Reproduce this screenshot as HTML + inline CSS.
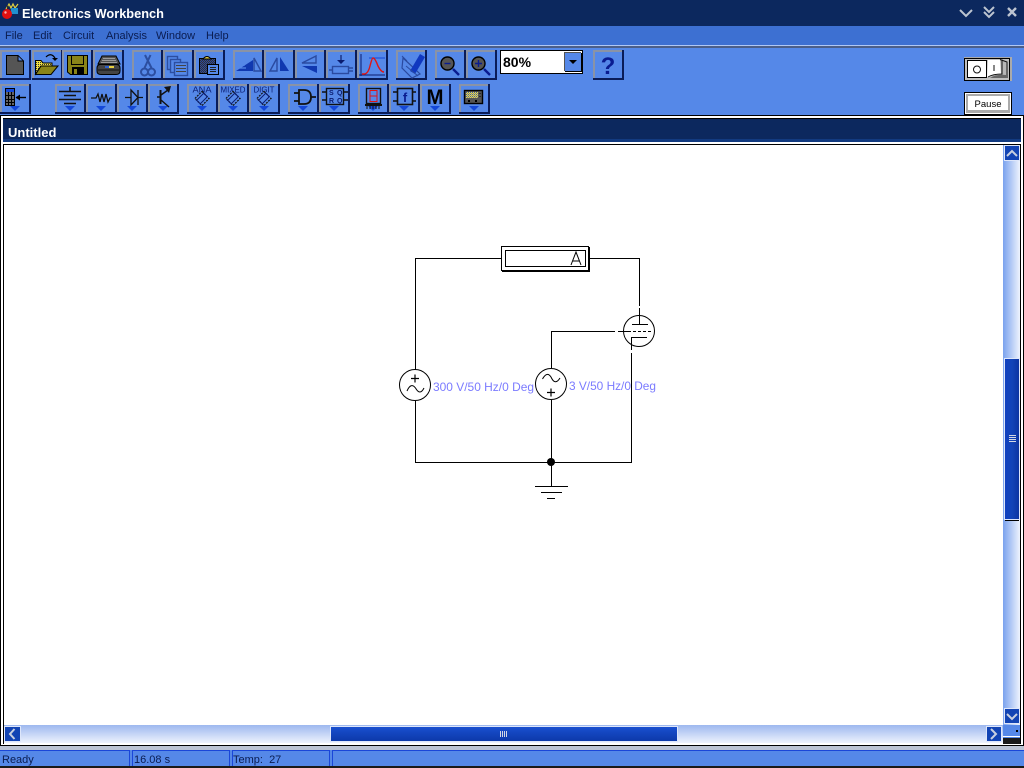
<!DOCTYPE html>
<html><head><meta charset="utf-8"><style>
html,body{margin:0;padding:0;width:1024px;height:768px;overflow:hidden;background:#5588e8}
svg{position:absolute;left:0;top:0}
text{font-family:"Liberation Sans",sans-serif}
</style></head><body>
<svg width="1024" height="768" viewBox="0 0 1024 768" xmlns="http://www.w3.org/2000/svg">
<defs>
<pattern id="dy" width="2" height="2" patternUnits="userSpaceOnUse"><rect width="2" height="2" fill="#f0e040"/><rect width="1" height="1" fill="#333"/></pattern>
<pattern id="ds" width="2" height="2" patternUnits="userSpaceOnUse"><rect width="2" height="2" fill="#f0e040"/><rect width="1" height="1" fill="#3a5ab0"/><rect x="1" y="1" width="1" height="1" fill="#888"/></pattern>
<pattern id="dg" width="2" height="2" patternUnits="userSpaceOnUse"><rect width="2" height="2" fill="#2a48a0"/><rect width="1" height="1" fill="#333"/><rect x="1" y="1" width="1" height="1" fill="#333"/></pattern>
<linearGradient id="vt" x1="0" x2="1" y1="0" y2="0"><stop offset="0" stop-color="#7aa2ee"/><stop offset="1" stop-color="#eef3fd"/></linearGradient>
<linearGradient id="ht" x1="0" x2="0" y1="0" y2="1"><stop offset="0" stop-color="#9db8ef"/><stop offset="1" stop-color="#eef3fd"/></linearGradient>
<linearGradient id="vth" x1="0" x2="1" y1="0" y2="0"><stop offset="0" stop-color="#0f3fc0"/><stop offset=".5" stop-color="#1244b8"/><stop offset="1" stop-color="#0c34a0"/></linearGradient>
<linearGradient id="hth" x1="0" x2="0" y1="0" y2="1"><stop offset="0" stop-color="#1a50d0"/><stop offset="1" stop-color="#0c38a8"/></linearGradient>
<g id="b"><rect width="31" height="30" fill="#0a1c58"/><path d="M0 0H29V2H2V28H0Z" fill="#8a93a6"/><rect x="2" y="2" width="27" height="26" fill="#5588e8"/></g>
<g id="a"><use href="#b"/><path d="M10 22H20L15 27Z" fill="#1448d8"/></g>
<g id="chip"><g transform="rotate(45 15 16.500)"><rect x="10" y="11.500" width="10" height="10" fill="#5588e8" stroke="#111" stroke-width="1.200" stroke-dasharray="2 1"/><rect x="12.500" y="11.500" width="5" height="10" fill="none" stroke="#0a1c70" stroke-width="1"/></g></g>
</defs>

<!-- Title bar -->
<rect width="1024" height="26" fill="#0c285e"/>
<rect y="26" width="1024" height="19" fill="#3d70d2"/>
<rect y="45" width="1024" height="1" fill="#b0c8f6"/>
<rect y="46" width="1024" height="2" fill="#4c5f88"/>
<rect y="48" width="1024" height="68" fill="#5588e8"/>

<!-- app icon -->
<path d="M6 9L9 4L11 8L13 4L15 8L18 4" fill="none" stroke="#e0d040" stroke-width="1.200"/>
<rect x="11" y="8" width="7" height="6" fill="#2090d0"/>
<circle cx="7" cy="14" r="5" fill="#e01010"/><circle cx="5.500" cy="12.500" r="1.200" fill="#ffb0b0"/>
<path d="M8 9L7 5" stroke="#222" stroke-width="1"/>
<text x="22" y="18" fill="#fff" font-size="13" font-weight="bold" textLength="142" lengthAdjust="spacingAndGlyphs">Electronics Workbench</text>

<!-- window controls -->
<path d="M960 10L966 16L972 10" fill="none" stroke="#bcc4d0" stroke-width="2"/>
<path d="M984 7L989 12L994 7M984 12L989 17L994 12" fill="none" stroke="#bcc4d0" stroke-width="2"/>
<path d="M1008 8L1016 16M1016 8L1008 16" fill="none" stroke="#bcc4d0" stroke-width="2.400"/>

<!-- menu -->
<g fill="#0a1c50" font-size="11">
<text x="5" y="39">File</text><text x="33" y="39">Edit</text><text x="63" y="39">Circuit</text><text x="106" y="39">Analysis</text><text x="156" y="39">Window</text><text x="206" y="39">Help</text>
</g>

<!-- Toolbar row 1 -->
<use href="#b" x="0" y="50"/><use href="#b" x="32" y="50"/><use href="#b" x="62" y="50"/><use href="#b" x="93" y="50"/>
<use href="#b" x="132" y="50"/><use href="#b" x="163" y="50"/><use href="#b" x="194" y="50"/>
<use href="#b" x="233" y="50"/><use href="#b" x="264" y="50"/><use href="#b" x="295" y="50"/><use href="#b" x="326" y="50"/><use href="#b" x="357" y="50"/>
<use href="#b" x="396" y="50"/><use href="#b" x="435" y="50"/><use href="#b" x="466" y="50"/><use href="#b" x="593" y="50"/>

<!-- new -->
<path d="M6.500 55.500H18L23.500 61V74.500H6.500Z" fill="#555" stroke="#000"/><path d="M18 56V61H23" fill="#5588e8" stroke="#000"/>
<!-- open -->
<path d="M35.500 74V60.500H41L43 63H52V66H41L35.500 74Z" fill="url(#dy)" stroke="#000"/>
<path d="M35.500 74.500L41 66H58L51 74.500Z" fill="#8a8418" stroke="#000"/>
<path d="M46 57Q51 52 55 58" fill="none" stroke="#000" stroke-width="1.200"/><path d="M52 58H58L55 61Z" fill="#000"/>
<!-- save -->
<path d="M67.500 55.500H87.500V74.500H70.500L67.500 72Z" fill="#8a8418" stroke="#000"/>
<rect x="71.500" y="55.500" width="12" height="9" fill="#8a8418" stroke="#000"/><rect x="72" y="67" width="12" height="8" fill="#000"/><rect x="74" y="69" width="3" height="5" fill="#8a8418"/>
<!-- print -->
<path d="M102 56H116L120 64H98Z" fill="#555" stroke="#000"/><path d="M103 58.500H115M102 60.500H116M101 62.500H117" stroke="#999"/>
<path d="M100 64.500H117Q120 65 120 68V71Q120 74.500 116 74.500H101Q97 74.500 97 71V68Q97 65 100 64.500Z" fill="#444" stroke="#000"/><rect x="109" y="66" width="5" height="2" fill="#e8d040"/><rect x="105" y="66" width="4" height="2" fill="#2a60d0"/><path d="M98 70H119" stroke="#111"/>

<!-- cut -->
<g fill="none" stroke="#2c4ea0" stroke-width="2"><path d="M145 55L151.500 68M150.500 55L144.500 68"/><circle cx="144.500" cy="72" r="3.500"/><circle cx="151.500" cy="72" r="3.500"/></g>
<!-- copy -->
<g stroke="#2c4ea0" stroke-width="1.400"><rect x="167.500" y="56.500" width="10" height="13" fill="#5588e8"/><rect x="170.500" y="59.500" width="10" height="13" fill="#5588e8"/><rect x="174.500" y="62.500" width="13" height="13" fill="#5588e8"/></g><path d="M176 65.500H186M176 68.500H186M176 71.500H186" stroke="#444"/>
<!-- paste -->
<rect x="199.500" y="58.500" width="16" height="15" fill="url(#dg)" stroke="#000"/><path d="M203 59Q207 54 211 59Z" fill="#e8d040" stroke="#000"/>
<rect x="207.500" y="64.500" width="11" height="10" fill="#5588e8" stroke="#000"/><path d="M210 67.500H216M210 69.500H216M210 71.500H216" stroke="#222"/>

<!-- flip set -->
<path d="M236 71L253 60V71Z" fill="#1038b0"/><path d="M242 63Q240 60 245 60M241 65H245M239 68H246" fill="none" stroke="#5588e8" stroke-width="1.200"/>
<path d="M254 71L254 58L261 71Z" fill="#5588e8" stroke="#2a4aa0" stroke-width="1.400"/>
<path d="M270 71L277 58V71Z" fill="#5588e8" stroke="#2a4aa0" stroke-width="1.400"/><path d="M280 57V71H289Z" fill="#1038b0"/>
<path d="M302 63L316 56V63Z" fill="#5588e8" stroke="#2a4aa0" stroke-width="1.400"/><path d="M302 66H317V73Z" fill="#1038b0"/>
<!-- capacitor-ish -->
<path d="M341 55V61" stroke="#2a4aa0" stroke-width="2"/><path d="M337 60H345L341 64Z" fill="#0a1c70"/>
<rect x="332.500" y="66.500" width="16" height="7" fill="#5588e8" stroke="#2a4aa0" stroke-width="1.400"/><path d="M349 68H353M349 71H353M329 70H332" stroke="#2a4aa0" stroke-width="1.400"/>
<!-- graph -->
<path d="M361 54V76M359 75H385" stroke="#0a1c70" stroke-width="1"/><path d="M369 58H385" stroke="#1448d8"/>
<path d="M362 74H364Q368 74 370 66Q372 58 373 58Q375 58 378 66Q381 72 384 72" fill="none" stroke="#e01414" stroke-width="1.400"/>
<!-- describe -->
<path d="M403 58L416 70L420 74L412 78L402 68Z" fill="none" stroke="#2a4aa0" stroke-width="1.200"/>
<path d="M410 71L420 54L425 57L415 74Z" fill="#1038c0"/><path d="M402 56L407 61" stroke="#2a4aa0"/><path d="M406 66L418 76" stroke="#2a4aa0"/>
<!-- zoom -->
<circle cx="447.500" cy="63.500" r="6.500" fill="#555" stroke="#000" stroke-width="1.400"/><path d="M444.500 63.500H450.500" stroke="#0a1c90" stroke-width="1.400"/><path d="M453 69L459 75" stroke="#0a1c90" stroke-width="2.400"/>
<circle cx="478.500" cy="63.500" r="6.500" fill="#555" stroke="#000" stroke-width="1.400"/><path d="M475 63.500H482M478.500 60V67" stroke="#0a1c90" stroke-width="1.400"/><path d="M484 69L490 75" stroke="#0a1c90" stroke-width="2.400"/>

<!-- combo -->
<rect x="500.500" y="50.500" width="82" height="23" fill="#fff" stroke="#000"/>
<rect x="564" y="53" width="17" height="18" fill="#5588e8"/><path d="M564.500 71V52.500H581" fill="none" stroke="#555"/><path d="M565 71.500H581.500V53" fill="none" stroke="#000"/>
<path d="M569 60H577L573 64Z" fill="#000"/>
<text x="503" y="67" font-size="14" font-weight="bold" fill="#000">80%</text>
<!-- help -->
<text x="608" y="74" font-size="24" font-weight="bold" fill="#0a1c90" text-anchor="middle">?</text>

<!-- Toolbar row 2 -->
<use href="#a" x="0" y="84"/>
<use href="#a" x="55" y="84"/><use href="#a" x="86" y="84"/><use href="#a" x="117" y="84"/><use href="#a" x="148" y="84"/>
<use href="#a" x="187" y="84"/><use href="#a" x="218" y="84"/><use href="#a" x="249" y="84"/>
<use href="#a" x="288" y="84"/><use href="#a" x="319" y="84"/>
<use href="#a" x="358" y="84"/><use href="#a" x="389" y="84"/><use href="#a" x="420" y="84"/><use href="#a" x="459" y="84"/>

<!-- parts bin -->
<rect x="5.500" y="88.500" width="9" height="17" fill="#666" stroke="#000"/><rect x="6" y="89" width="8" height="3" fill="#1448d8"/><path d="M8.500 92V105M11.500 92V105M6 95.500H14M6 99.500H14M6 102.500H14" stroke="#000"/>
<path d="M16 97.500H26" stroke="#000" stroke-width="1.400"/><path d="M20 94.500L15.500 97.500L20 100.500Z" fill="#000"/>
<!-- battery -->
<g stroke="#111"><path d="M70 87V91M59 91.500H81M64 95.500H76M59 99.500H81M64 103.500H76" stroke-width="1.600"/></g>
<!-- resistor -->
<path d="M91 98H96L98 94L100 102L102 94L104 102L106 94L108 102L110 98H112" fill="none" stroke="#111" stroke-width="1.300"/>
<!-- diode -->
<path d="M125 97.500H131M138 97.500H143" stroke="#111" stroke-width="1.300" fill="none"/><path d="M131 90L138 97.500L131 105Z" fill="none" stroke="#111" stroke-width="1.300"/><path d="M138 90V105" stroke="#111" stroke-width="1.300"/>
<!-- transistor -->
<path d="M160.500 90V104" stroke="#111" stroke-width="2"/><path d="M157 97H160M161 95L168 90M161 100L169 107" stroke="#111" stroke-width="1.400" fill="none"/><path d="M164 87L171 86L169 93Z" fill="#111"/>

<!-- ANA MIXED DIGIT -->
<g font-size="8" fill="#0a1c70" text-anchor="middle">
<text x="202" y="92.500" textLength="19" lengthAdjust="spacingAndGlyphs">ANA</text><text x="233" y="92.500" textLength="25" lengthAdjust="spacingAndGlyphs">MIXED</text><text x="264" y="92.500" textLength="21" lengthAdjust="spacingAndGlyphs">DIGIT</text>
</g>
<use href="#chip" x="187" y="82"/><use href="#chip" x="218" y="82"/><use href="#chip" x="249" y="82"/>

<!-- AND gate -->
<path d="M299 90H304Q311 90 311 97Q311 104 304 104H299Z" fill="#5588e8" stroke="#111" stroke-width="1.800"/><path d="M294 93H299M294 101H299M311 97H316" stroke="#111" stroke-width="1.800"/>
<!-- SQ RQ -->
<rect x="326.500" y="88.500" width="17" height="16" fill="#5588e8" stroke="#111" stroke-width="1.400"/><path d="M322 92H326M322 100H326M344 92H348M344 100H348" stroke="#111" stroke-width="1.400"/>
<g font-size="7" fill="#0a1c70" font-weight="bold"><text x="329" y="95">S</text><text x="337" y="95">Q</text><text x="329" y="103">R</text><text x="337" y="103">Q</text></g>
<!-- 7-seg -->
<rect x="366.500" y="88.500" width="14" height="15" fill="#5588e8" stroke="#111" stroke-width="1.400"/><path d="M370 90.500H377V96H370ZM370 96V101.500H377V96" fill="none" stroke="#e01414"/><rect x="365" y="104" width="17" height="2" fill="#111"/><path d="M367 106V109M370 106V109M373 106V109M376 106V109M379 106V109" stroke="#111"/>
<!-- f -->
<rect x="397.500" y="88.500" width="15" height="16" fill="#5588e8" stroke="#111" stroke-width="1.600"/><path d="M393 92H397M393 101H397M413 92H416M413 101H416" stroke="#111" stroke-width="1.400"/>
<text x="405" y="102" font-size="13" font-weight="bold" text-anchor="middle" fill="#0a1c90">f</text>
<!-- M -->
<text x="435" y="104" font-size="21" font-weight="bold" text-anchor="middle" fill="#000" textLength="17" lengthAdjust="spacingAndGlyphs">M</text>
<!-- scope -->
<rect x="464.500" y="90.500" width="18" height="13" fill="#555" stroke="#000" stroke-width="1.400"/><rect x="466" y="92" width="12" height="6" fill="url(#ds)"/><rect x="468" y="100" width="2" height="2" fill="#000"/><rect x="475" y="100" width="2" height="2" fill="#000"/><path d="M480 93V94M480 96V97" stroke="#000"/>

<!-- switch -->
<rect x="964" y="57" width="48" height="24" fill="#aaa"/>
<rect x="964.500" y="58.500" width="45" height="22" fill="#c0c0c0" stroke="#000"/>
<rect x="967.500" y="60.500" width="19" height="17" fill="#fff" stroke="#000"/>
<circle cx="977" cy="69.500" r="3.500" fill="none" stroke="#111"/>
<path d="M988 60H1000L1005 62V77H987Z" fill="#fff"/><path d="M1000 59L1006 62V78H988Q992 75 1001 74Z" fill="#b8b8b8"/><path d="M988 77Q993 74 1002 74V59.500M1000 59.500L1007 62V78" fill="none" stroke="#111"/><path d="M994 65V71" stroke="#111"/><path d="M990 78Q996 74 1006 75V78Z" fill="#666"/>

<!-- pause -->
<rect x="964" y="92" width="48" height="23" fill="#000"/>
<rect x="965" y="93" width="46" height="21" fill="#fff"/>
<rect x="966" y="94" width="44" height="19" fill="#aaa"/>
<rect x="968" y="96" width="40" height="14" fill="#fff"/>
<text x="988" y="107" font-size="9.500" text-anchor="middle" fill="#000" textLength="27" lengthAdjust="spacing">Pause</text>

<!-- doc window -->
<rect y="115" width="1024" height="1" fill="#000"/>
<rect y="116" width="1024" height="630" fill="#fff"/>
<rect x="0" y="115" width="1" height="631" fill="#000"/>
<rect x="1023" y="115" width="1" height="631" fill="#000"/>
<rect x="3" y="118" width="1018" height="1" fill="#000"/>
<rect x="3" y="119" width="1018" height="23" fill="#0c285e"/>
<rect x="3" y="139" width="1018" height="3" fill="#123a80"/>
<rect x="3" y="144" width="1018" height="1" fill="#000"/>
<rect x="3" y="144" width="1" height="600" fill="#000"/>
<rect x="1020" y="144" width="1" height="600" fill="#000"/>
<rect x="0" y="745" width="1024" height="1" fill="#000"/>
<text x="8" y="137" fill="#fff" font-size="13" font-weight="bold">Untitled</text>

<!-- vertical scrollbar -->
<rect x="1003" y="145" width="17" height="580" fill="url(#vt)"/>
<rect x="1004.500" y="145.500" width="15" height="15" fill="#1244b4" stroke="#dde6fa"/><path d="M1007 156L1012 151L1017 156" fill="none" stroke="#c8d0e0" stroke-width="2"/>
<rect x="1004.500" y="708.500" width="15" height="15" fill="#1244b4" stroke="#dde6fa"/><path d="M1007 714L1012 719L1017 714" fill="none" stroke="#c8d0e0" stroke-width="2"/>
<rect x="1004.500" y="358.500" width="15" height="161" fill="url(#vth)" stroke="#dde6fa"/>
<path d="M1005 520.500H1019" stroke="#000"/>
<path d="M1009 435.500H1016M1009 437.500H1016M1009 439.500H1016M1009 441.500H1016" stroke="#d4d8e4"/>

<!-- horizontal scrollbar -->
<rect x="4" y="725" width="999" height="18" fill="url(#ht)"/>
<rect x="4.500" y="726.500" width="16" height="15" fill="#1244b4" stroke="#dde6fa"/><path d="M14.500 729L10 734L14.500 739" fill="none" stroke="#c8d0e0" stroke-width="2"/>
<rect x="986.500" y="726.500" width="15" height="15" fill="#1244b4" stroke="#dde6fa"/><path d="M991 729L996 734L991 739" fill="none" stroke="#c8d0e0" stroke-width="2"/>
<rect x="330.500" y="726.500" width="347" height="15" fill="url(#hth)" stroke="#dde6fa"/>
<path d="M500.500 731V737M502.500 731V737M504.500 731V737M506.500 731V737" stroke="#d4d8e4"/>
<!-- corner -->
<rect x="1003" y="725" width="17" height="11" fill="#5588e8"/><rect x="1016" y="730" width="2" height="2" fill="#000"/><rect x="1003" y="736" width="17" height="1" fill="#fff"/><rect x="1003" y="737" width="17" height="1" fill="#5588e8"/><rect x="1003" y="738" width="17" height="6" fill="#1a1a1a"/>

<!-- status bar -->
<rect y="746" width="1024" height="4" fill="#bcc4d4"/>
<rect y="750" width="1024" height="16" fill="#5588e8"/>
<rect y="766" width="1024" height="2" fill="#1a1a1a"/>
<g fill="none" stroke="#1a46d8"><path d="M0 750.500H129.500V766M132.500 766V750.500H229.500V766M232.500 766V750.500H329.500V766M332.500 766V750.500H1024"/></g>
<g font-size="11" fill="#0a1c50">
<text x="2" y="763">Ready</text><text x="134" y="763">16.08 s</text><text x="233" y="763" xml:space="preserve">Temp:  27</text>
</g>

<!-- circuit -->
<g fill="none" stroke="#000" stroke-width="1" shape-rendering="crispEdges">
<path d="M501 258.500H415.500V370M415.500 401V462.500H631.500V353M590 258.500H639.500V306M639.500 308V325"/>
<path d="M551.500 368V331.500H615M618 331.500H631"/>
<path d="M551.500 400V487"/>
<path d="M535 486.500H568M541 492.500H562M547 498.500H555"/>
<path d="M632 324.500H648"/>
<path d="M631.500 350V337.500H647"/>
<path d="M633 331.500H652" stroke-dasharray="3 2"/>
<rect x="501.500" y="246.500" width="87" height="24"/>
<rect x="505.500" y="250.500" width="80" height="16"/>
</g>
<rect x="589" y="247" width="1" height="24" fill="#000"/>
<rect x="502" y="270" width="88" height="2" fill="#000"/>
<g fill="none" stroke="#000" stroke-width="1">
<circle cx="415" cy="385" r="15.500"/><circle cx="551" cy="384" r="15.500"/><circle cx="639" cy="331" r="15.500"/>
<path d="M407 391Q411 382 415.500 388Q420 396 424 388"/>
<path d="M542.500 379Q547 371 551 377Q555 386 560 378"/>
<path d="M571 265L576 252L581 265M573 261H579"/>
</g>
<path d="M411 378.500H419M415 374.500V382.500M547 392.500H555M551 388.500V396.500" stroke="#000" stroke-width="1.200" fill="none"/>
<circle cx="551" cy="462" r="4" fill="#000"/>
<g fill="#7b7bff" font-size="12">
<text x="433" y="391" textLength="101" lengthAdjust="spacingAndGlyphs">300 V/50 Hz/0 Deg</text>
<text x="569" y="390" textLength="87" lengthAdjust="spacingAndGlyphs">3 V/50 Hz/0 Deg</text>
</g>
</svg>
</body></html>
